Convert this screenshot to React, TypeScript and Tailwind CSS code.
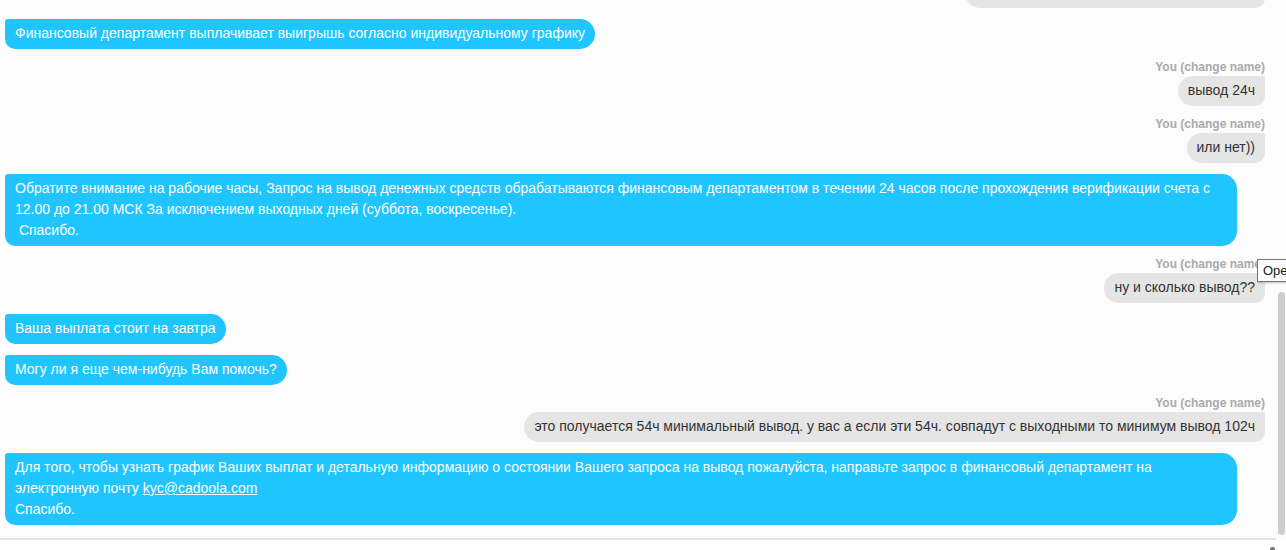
import React from "react";

const font = { fontFamily: '"Liberation Sans", Arial, sans-serif' };

function Agent({ children }: { children: React.ReactNode }) {
  return (
    <div className="flex justify-start">
      <div className="max-w-[1232px] bg-[#20c5ff] text-white text-[14px] leading-[21px] pt-[4px] pb-[5px] px-[10px] rounded-[15px] rounded-tl-[3px] rounded-bl-[10px]">
        {children}
      </div>
    </div>
  );
}

function User({ children }: { children: React.ReactNode }) {
  return (
    <div className="flex flex-col items-end">
      <div className="text-[12px] leading-[14px] font-bold text-[#aaaaaa] mb-[2px]">You (change name)</div>
      <div className="bg-[#e5e5e5] text-[#333333] text-[14px] leading-[21px] pt-[4px] pb-[5px] px-[10px] rounded-[15px] rounded-tr-[2px] rounded-br-[10px]">
        {children}
      </div>
    </div>
  );
}

export default function App() {
  return (
    <div className="relative w-[1286px] h-[550px] bg-[#fcfcfc] flex flex-col overflow-hidden" style={font}>
      <div className="flex h-[538px]">
        <div className="flex-1 overflow-hidden pl-[5px] pr-[11px]">
          <div className="flex flex-col gap-[11px]">
            <div className="flex justify-end -mt-[22px]">
              <div className="w-[300px] h-[30px] bg-[#e5e5e5] rounded-[15px] rounded-tr-[2px] rounded-br-[10px]" />
            </div>
            <Agent>Финансовый департамент выплачивает выигрышь согласно индивидуальному графику</Agent>
            <User>вывод 24ч</User>
            <User>или нет))</User>
            <Agent>
              Обратите внимание на рабочие часы, Запрос на вывод денежных средств обрабатываются финансовым департаментом в течении 24 часов после прохождения верификации счета с 12.00 до 21.00 МСК За исключением выходных дней (суббота, воскресенье).
              <br />
              {"\u00a0Спасибо."}
            </Agent>
            <User>ну и сколько вывод??</User>
            <Agent>Ваша выплата стоит на завтра</Agent>
            <Agent>Могу ли я еще чем-нибудь Вам помочь?</Agent>
            <User>это получается 54ч минимальный вывод. у вас а если эти 54ч. совпадут с выходными то минимум вывод 102ч</User>
            <Agent>
              Для того, чтобы узнать график Ваших выплат и детальную информацию о состоянии Вашего запроса на вывод пожалуйста, направьте запрос в финансовый департамент на электронную почту{" "}
              <a className="underline text-white">kyc@cadoola.com</a>
              <br />
              Спасибо.
            </Agent>
          </div>
        </div>
        <div className="w-[10px] flex flex-col pt-[292px] pb-[3px] pl-[2px] pr-[1px]">
          <div className="flex-1 bg-[#cdcdcd] rounded-[4px]" />
        </div>
      </div>
      <div className="h-[2px] bg-[#e3e3e3] mr-[10px]" />
      <div className="flex-1 bg-white flex justify-end pr-[11px] pt-[7px]">
        <div className="w-[5px] h-[3px] bg-[#777] rounded-t-[2px]" />
      </div>
      <div className="absolute left-[1257px] top-[259px] h-[23px] pl-[5px] pr-[6px] whitespace-nowrap bg-[#fbfbfb] border border-[#767676] shadow-[1px_1px_2px_rgba(0,0,0,0.25)] text-[13px] leading-[21px] text-[#222]">
        Open chat
      </div>
    </div>
  );
}
